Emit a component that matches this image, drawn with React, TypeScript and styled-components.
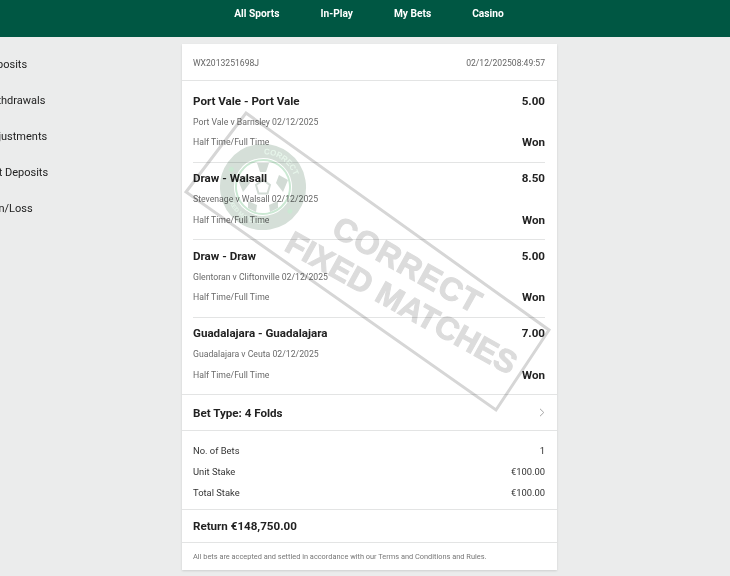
import React from "react";
import styled, { createGlobalStyle } from "styled-components";

const Global = createGlobalStyle`
  html, body { margin: 0; padding: 0; background: #ebecec; }
  body { width: 730px; height: 576px; overflow: hidden; font-family: Roboto, "Open Sans", sans-serif; color: #222; }
`;
const Page = styled.div`display: flex; flex-direction: column; height: 576px; position: relative; overflow: hidden;`;
const Header = styled.header`
  height: 37px; background: #005743; display: flex; justify-content: center; gap: 41px;
  padding: 6px 0 0 8px; box-sizing: border-box; color: #fff; font-size: 10.2px; font-weight: 700;
`;
const NavItem = styled.span`line-height: 15px;`;
const Main = styled.div`display: grid; grid-template-columns: 182px 375px; position: relative; padding-top: 7px;`;
const Side = styled.nav`overflow: hidden; padding-top: 9px;`;
const SideItem = styled.div<{ $o: number }>`height: 36px; line-height: 24px; font-size: 11px; color: #222; white-space: nowrap; margin-left: ${p => p.$o}px;`;
const Card = styled.section`background: #fff; width: 375px; height: 526px; box-shadow: 0 1px 2px rgba(0,0,0,.12); display: flex; flex-direction: column;`;
const TopRow = styled.div`height: 37px; box-sizing: border-box; padding: 1px 12px 0 11px; display: flex; justify-content: space-between; align-items: center; font-size: 8.6px; color: #666; border-bottom: 1px solid #e3e4e4;`;
const Selections = styled.div`padding: 0 12px 0 11px;`;
const Selection = styled.div<{ $h: number; $pad: number }>`
  height: ${p => p.$h}px; padding-top: ${p => p.$pad}px; box-sizing: border-box; border-bottom: 1px solid #e3e4e4;
  &:last-child { border-bottom: none; }
`;
const Line = styled.div<{ $h: number }>`display: flex; justify-content: space-between; align-items: center; height: ${p => p.$h}px;`;
const Title = styled.span`font-size: 11.6px; font-weight: 700; color: #222;`;
const Odds = styled.span`font-size: 11.6px; font-weight: 700; color: #222;`;
const Sub = styled.span`font-size: 8.7px; color: #6a6a6a;`;
const Won = styled.span`font-size: 11.6px; font-weight: 700; color: #222;`;
const Row = styled.div`height: 36px; padding: 0 12px 0 11px; display: flex; justify-content: space-between; align-items: center; border-top: 1px solid #e3e4e4; box-sizing: border-box; font-size: 11.6px; font-weight: 700;`;
const Stakes = styled.div`padding: 9px 12px 6px 11px; border-top: 1px solid #e3e4e4; display: flex; flex-direction: column; height: 79px; box-sizing: border-box;`;
const StakeRow = styled.div`height: 21px; display: flex; justify-content: space-between; align-items: center; font-size: 9.4px; color: #333;`;
const Return = styled.div`height: 33px; padding: 0 12px 0 11px; display: flex; align-items: center; border-top: 1px solid #e3e4e4; font-size: 11.6px; font-weight: 700; box-sizing: border-box;`;
const Foot = styled.div`padding: 0 12px 0 11px; flex: 1; display: flex; align-items: center; border-top: 1px solid #e3e4e4; font-size: 7.4px; color: #777;`;
const Stamp = styled.svg`position: absolute; left: 0; top: 0; pointer-events: none; mix-blend-mode: multiply;`;

const selections = [
  { t: "Port Vale - Port Vale", o: "5.00", m: "Port Vale v Barnsley 02/12/2025", h: 82, pad: 12, sub: 25 },
  { t: "Draw - Walsall", o: "8.50", m: "Stevenage v Walsall 02/12/2025", h: 77, pad: 7, sub: 26 },
  { t: "Draw - Draw", o: "5.00", m: "Glentoran v Cliftonville 02/12/2025", h: 78, pad: 8, sub: 25 },
  { t: "Guadalajara - Guadalajara", o: "7.00", m: "Guadalajara v Ceuta 02/12/2025", h: 76, pad: 7, sub: 26 },
];

export default function App() {
  return (
    <Page>
      <Global />
      <Header>
        <NavItem>All Sports</NavItem><NavItem>In-Play</NavItem><NavItem>My Bets</NavItem><NavItem>Casino</NavItem>
      </Header>
      <Main>
        <Side>
          <SideItem $o={-16}>Deposits</SideItem>
          <SideItem $o={-15}>Withdrawals</SideItem>
          <SideItem $o={-15}>Adjustments</SideItem>
          <SideItem $o={-15}>Net Deposits</SideItem>
          <SideItem $o={-14}>Win/Loss</SideItem>
        </Side>
        <Card>
          <TopRow><span>WX2013251698J</span><span>02/12/202508:49:57</span></TopRow>
          <Selections>
            {selections.map(s => (
              <Selection key={s.t} $h={s.h} $pad={s.pad}>
                <Line $h={16}><Title>{s.t}</Title><Odds>{s.o}</Odds></Line>
                <Line $h={s.sub}><Sub>{s.m}</Sub></Line>
                <Line $h={16}><Sub>Half Time/Full Time</Sub><Won>Won</Won></Line>
              </Selection>
            ))}
          </Selections>
          <Row>
            <span>Bet Type: 4 Folds</span>
            <svg width="6" height="9" viewBox="0 0 6 9" fill="none" stroke="#a5a5a5" strokeWidth="1"><path d="M1 .8 4.8 4.5 1 8.2" /></svg>
          </Row>
          <Stakes>
            <StakeRow><span>No. of Bets</span><span>1</span></StakeRow>
            <StakeRow><span>Unit Stake</span><span>€100.00</span></StakeRow>
            <StakeRow><span>Total Stake</span><span>€100.00</span></StakeRow>
          </Stakes>
          <Return>Return €148,750.00</Return>
          <Foot>All bets are accepted and settled in accordance with our Terms and Conditions and Rules.</Foot>
        </Card>
      </Main>
      <Stamp width="730" height="576" viewBox="0 0 730 576">
        <path d="M246 113 549 330 496 410 186 192Z" fill="none" stroke="#d6d6d6" strokeWidth="3" />
        <g transform="translate(263 187) rotate(35.5)">
          <circle r="36" fill="none" stroke="#d5dfd8" strokeWidth="14" />
          <circle r="27" fill="#fff" stroke="#cbe8d3" strokeWidth="2" />
          <defs>
            <path id="arcTop" d="M-33 0A33 33 0 0 1 33 0" />
            <path id="arcBot" d="M-37 0A37 37 0 0 0 37 0" />
          </defs>
          <text fontFamily="'Liberation Sans', sans-serif" fontWeight="700" fontSize="8" fill="#e6f5ea" textAnchor="middle">
            <textPath href="#arcTop" startOffset="50%">CORRECT</textPath>
          </text>
          <text fontFamily="'Liberation Sans', sans-serif" fontWeight="700" fontSize="6" fill="#e6f5ea" textAnchor="middle">
            <textPath href="#arcBot" startOffset="50%">FIXED MATCHES</textPath>
          </text>
          <circle cx="-36" cy="4" r="2.5" fill="#cbe8d3" />
          <circle cx="36" cy="4" r="2.5" fill="#cbe8d3" />
          <g transform="rotate(-35.5)" fill="#d2dbd5">
            <path d="M0-7 7-2 4.5 6.5H-4.5L-7-2Z" fill="#fff" stroke="#d2dbd5" strokeWidth="2" />
            <path d="M-6-24 6-24 3-15-3-15Z" />
            <path d="M-25-7-16-12-13-4-20 5Z" />
            <path d="M25-7 16-12 13-4 20 5Z" />
            <path d="M-15 14-6 18-7 25-15 21Z" />
            <path d="M15 14 6 18 7 25 15 21Z" />
          </g>
        </g>
        <g fill="#dcdcdc" stroke="#dcdcdc" strokeWidth="1" fontFamily="'Liberation Sans', sans-serif" fontWeight="700" fontSize="32" textAnchor="middle">
          <text transform="translate(408 264) rotate(29)" y="12" letterSpacing="1">CORRECT</text>
          <text transform="translate(402 302) rotate(29)" y="12">FIXED MATCHES</text>
        </g>
      </Stamp>
    </Page>
  );
}
